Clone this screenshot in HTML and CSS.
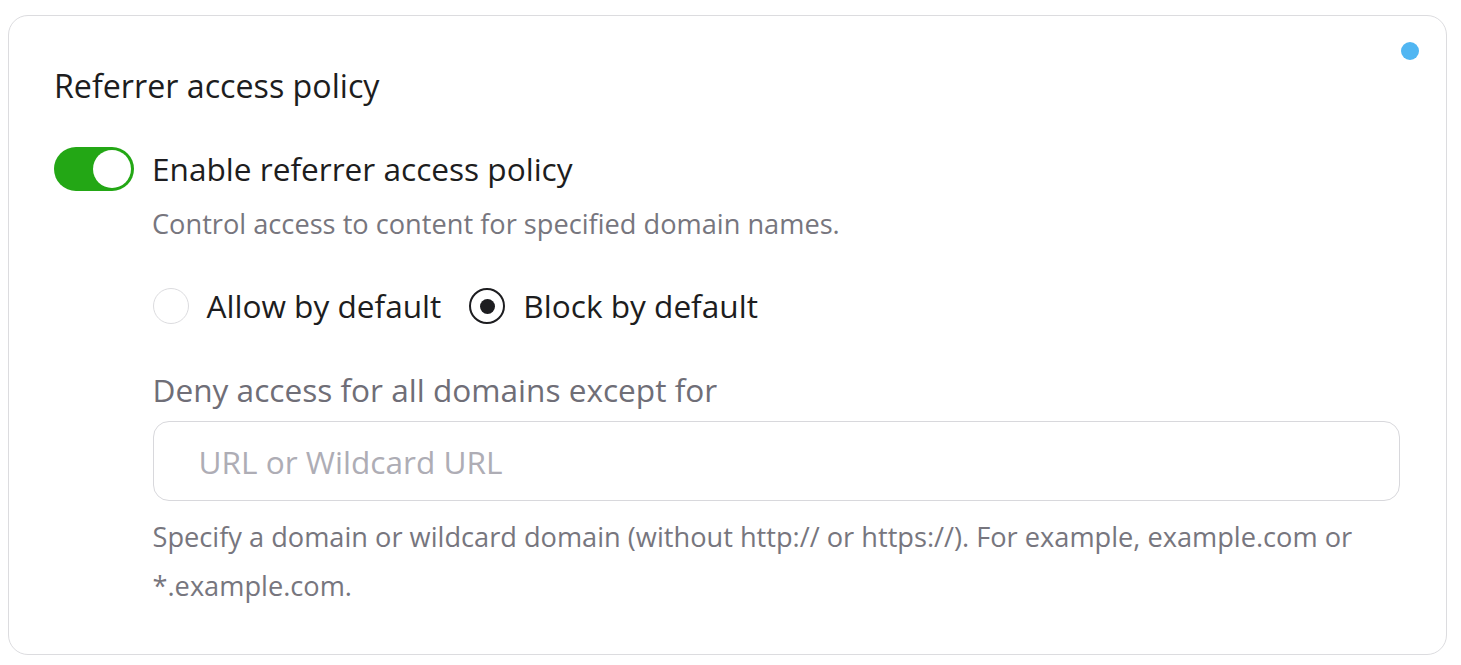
FILE: index.html
```html
<!DOCTYPE html>
<html>
<head>
<meta charset="utf-8">
<link rel="stylesheet" href="styles.css">
</head>
<body>
<div class="card">
  <span class="dot"></span>
  <h2 class="title">Referrer access policy</h2>
  <div class="toggle-row">
    <span class="toggle"><span class="knob"></span></span>
    <div class="toggle-text">
      <div class="toggle-label">Enable referrer access policy</div>
      <div class="toggle-desc">Control access to content for specified domain names.</div>
    </div>
  </div>
  <div class="content">
    <div class="radios">
      <label class="radio"><span class="circle"></span>Allow by default</label>
      <label class="radio"><span class="circle checked"></span>Block by default</label>
    </div>
    <div class="field-label">Deny access for all domains except for</div>
    <div class="input"><span class="placeholder">URL or Wildcard URL</span></div>
    <p class="help">Specify a domain or wildcard domain (without http:// or https://). For example, example.com or *.example.com.</p>
  </div>
</div>
</body>
</html>
```
FILE: styles.css
```css
html, body {
  margin: 0;
  padding: 0;
  background: #ffffff;
}
body {
  font-family: "Open Sans", "Noto Sans", sans-serif;
  padding: 15px 14px 0 8px;
}
.card {
  position: relative;
  border: 1.5px solid #dcdcdf;
  border-radius: 20px;
  padding: 50px 46px 44px 45px;
}
.dot {
  position: absolute;
  right: 27px;
  top: 26px;
  width: 18px;
  height: 18px;
  border-radius: 50%;
  background: #51b6f2;
}
.title {
  margin: 0;
  font-size: 32.2px;
  font-weight: 400;
  color: #1d1d20;
  line-height: 40px;
}
.toggle-row {
  display: flex;
  gap: 18px;
  margin-top: 41px;
}
.toggle {
  width: 80px;
  height: 44px;
  border-radius: 22px;
  background: #23a715;
  position: relative;
  flex: none;
}
.knob {
  position: absolute;
  right: 3px;
  top: 3px;
  width: 38px;
  height: 38px;
  border-radius: 50%;
  background: #fff;
}
.toggle-label {
  font-size: 31.6px;
  color: #1d1d20;
  line-height: 44px;
}
.toggle-desc {
  font-size: 27.2px;
  color: #77767e;
  line-height: 36px;
  margin-top: 15px;
}
.content {
  padding-left: 98.5px;
}
.radios {
  display: flex;
  gap: 28px;
  margin-top: 44px;
}
.radio {
  display: flex;
  align-items: center;
  gap: 18px;
  font-size: 31.6px;
  color: #1d1d20;
  line-height: 40px;
}
.circle {
  width: 36px;
  height: 36px;
  border-radius: 50%;
  border: 1.5px solid #dcdcdf;
  box-sizing: border-box;
  flex: none;
  position: relative;
}
.circle.checked {
  border: 2px solid #1d1d20;
}
.circle.checked::after {
  content: "";
  position: absolute;
  left: 50%;
  top: 50%;
  width: 15px;
  height: 15px;
  margin: -7.5px 0 0 -7.5px;
  border-radius: 50%;
  background: #1d1d20;
}
.field-label {
  font-size: 31.6px;
  color: #6f6e77;
  line-height: 40px;
  margin-top: 44px;
}
.input {
  margin-top: 11px;
  height: 80px;
  border: 1.5px solid #d8d8dc;
  border-radius: 16px;
  box-sizing: border-box;
  display: flex;
  align-items: center;
  padding-left: 45px;
}
.placeholder {
  font-size: 31.6px;
  color: #aeadb5;
}
.help {
  margin: 11px 0 0 0;
  font-size: 27.2px;
  line-height: 49px;
  color: #77767e;
}
```
